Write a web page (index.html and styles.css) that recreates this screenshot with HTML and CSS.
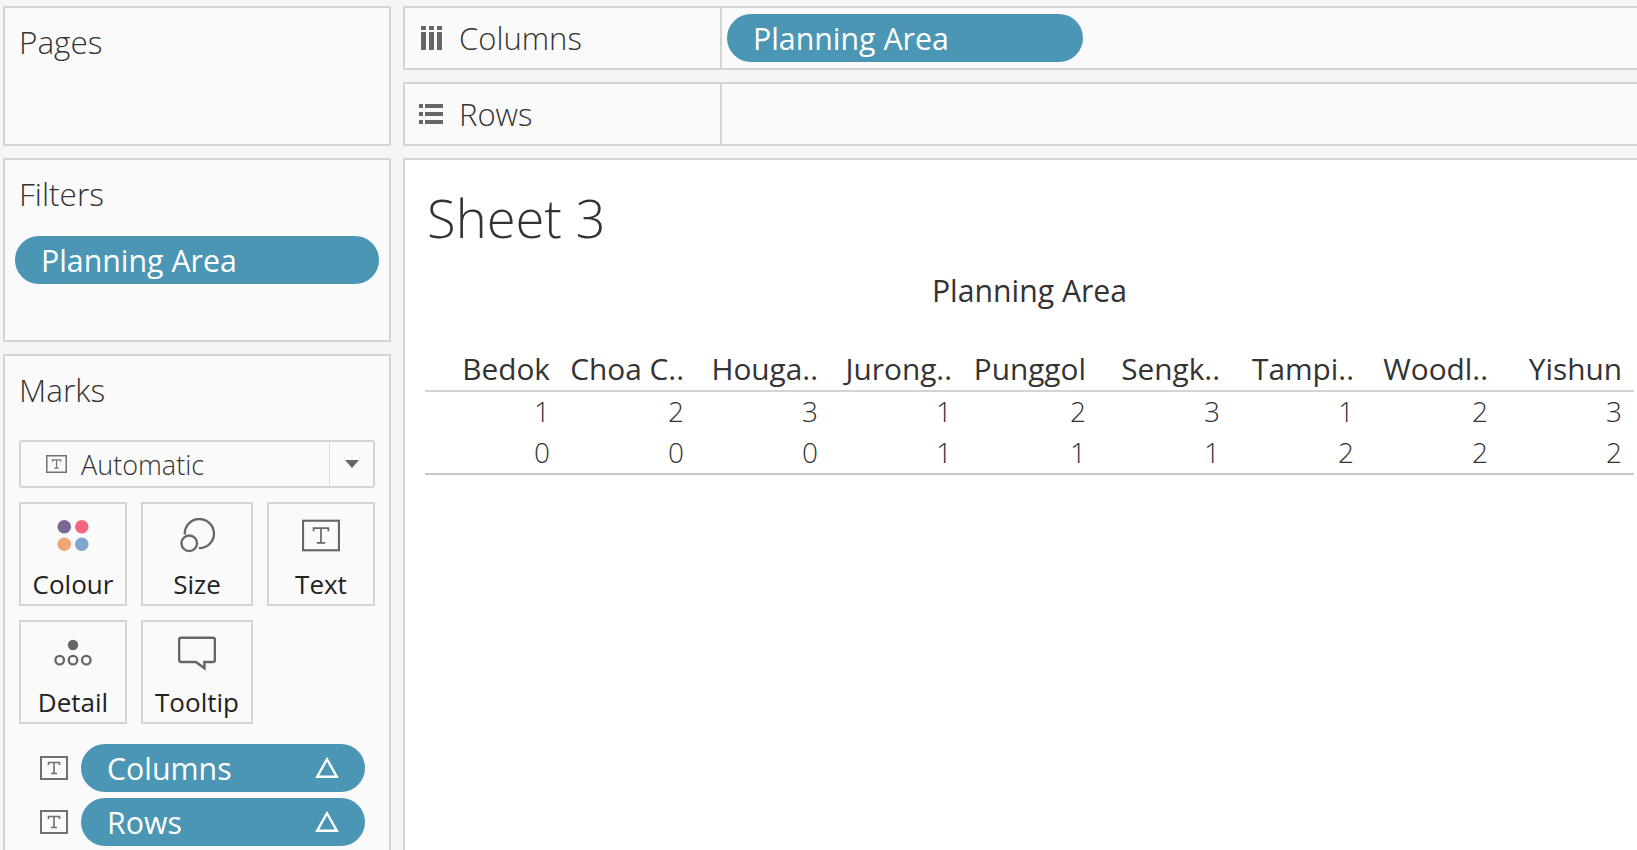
FILE: index.html
```html
<!DOCTYPE html>
<html lang="en">
<head>
  <meta charset="UTF-8">
  <title>Sheet 3</title>
  <link rel="stylesheet" href="styles.css">
</head>
<body>
  <svg class="defs" width="0" height="0">
    <symbol id="textIcon" viewBox="0 0 28 24">
      <rect x="1" y="1" width="26" height="22" fill="none" stroke="#707070" stroke-width="2"/>
      <path d="M8.5 9V6.5h11V9M14 6.5v11M11 17.5h6" fill="none" stroke="#707070" stroke-width="1.6"/>
    </symbol>
    <symbol id="delta" viewBox="0 0 22 20">
      <path d="M11 2 20 18H2Z" fill="none" stroke="#fff" stroke-width="2.2"/>
    </symbol>
  </svg>

  <div class="workspace">
    <aside class="sidebar">
      <section class="panel pagesPanel">
        <h2>Pages</h2>
      </section>
      <section class="panel filtersPanel">
        <h2>Filters</h2>
        <div class="pill filterPill">Planning Area</div>
      </section>
      <section class="panel marksPanel">
        <h2>Marks</h2>
        <div class="markType">
          <div class="markTypeLabel">
            <svg class="markTypeIcon"><use href="#textIcon"/></svg>
            <span>Automatic</span>
          </div>
          <div class="markTypeArrow"><i></i></div>
        </div>
        <div class="markCards">
          <div class="card">
            <svg class="cardIcon" viewBox="0 0 36 36">
              <circle cx="9" cy="9" r="7" fill="#7b6794"/>
              <circle cx="27" cy="9" r="7" fill="#f2677d"/>
              <circle cx="9" cy="27" r="7" fill="#eea677"/>
              <circle cx="27" cy="27" r="7" fill="#7fa6cd"/>
            </svg>
            <span>Colour</span>
          </div>
          <div class="card">
            <svg class="cardIcon" viewBox="0 0 36 36" fill="none" stroke="#666" stroke-width="2.4">
              <path d="M5.5 17A15 15 0 1 1 20 31"/>
              <circle cx="10" cy="26" r="8"/>
            </svg>
            <span>Size</span>
          </div>
          <div class="card">
            <svg class="cardIcon" viewBox="0 0 36 30" fill="none" stroke="#666">
              <rect x="1" y="1" width="34" height="28" stroke-width="2"/>
              <path d="M11 11V8h14v3M18 8v14M14 22h8" stroke-width="1.6"/>
            </svg>
            <span>Text</span>
          </div>
          <div class="card">
            <svg class="cardIcon" viewBox="0 0 40 30">
              <circle cx="20" cy="6" r="5.5" fill="#666"/>
              <g fill="none" stroke="#666" stroke-width="2.4">
                <circle cx="6" cy="22" r="4.5"/>
                <circle cx="20" cy="22" r="4.5"/>
                <circle cx="34" cy="22" r="4.5"/>
              </g>
            </svg>
            <span>Detail</span>
          </div>
          <div class="card">
            <svg class="cardIcon" viewBox="0 0 36 32" fill="none" stroke="#666" stroke-width="2.4">
              <path d="M3 1h30a2 2 0 0 1 2 2v19a2 2 0 0 1-2 2h-8v6l-8-6H3a2 2 0 0 1-2-2V3a2 2 0 0 1 2-2Z"/>
            </svg>
            <span>Tooltip</span>
          </div>
        </div>
        <div class="markFields">
          <div class="markField">
            <svg class="fieldIcon"><use href="#textIcon"/></svg>
            <div class="pill fieldPill">Columns <svg class="deltaIcon"><use href="#delta"/></svg></div>
          </div>
          <div class="markField">
            <svg class="fieldIcon"><use href="#textIcon"/></svg>
            <div class="pill fieldPill">Rows <svg class="deltaIcon"><use href="#delta"/></svg></div>
          </div>
        </div>
      </section>
    </aside>

    <main class="main">
      <div class="shelf">
        <div class="shelfLabel">
          <svg class="shelfIcon" viewBox="0 0 24 24" fill="#666">
            <rect x="2" y="0" width="5" height="4"/><rect x="10" y="0" width="5" height="4"/><rect x="18" y="0" width="5" height="4"/>
            <rect x="2" y="6" width="5" height="18"/><rect x="10" y="6" width="5" height="18"/><rect x="18" y="6" width="5" height="18"/>
          </svg>
          <span>Columns</span>
        </div>
        <div class="shelfBody"><div class="pill shelfPill">Planning Area</div></div>
      </div>
      <div class="shelf">
        <div class="shelfLabel">
          <svg class="shelfIcon" viewBox="0 0 24 20" fill="#666">
            <rect x="0" y="0" width="4" height="4"/><rect x="6" y="0" width="18" height="4"/>
            <rect x="0" y="8" width="4" height="4"/><rect x="6" y="8" width="18" height="4"/>
            <rect x="0" y="16" width="4" height="4"/><rect x="6" y="16" width="18" height="4"/>
          </svg>
          <span>Rows</span>
        </div>
        <div class="shelfBody"></div>
      </div>

      <section class="sheet">
        <h1>Sheet 3</h1>
        <div class="crossTitle">Planning Area</div>
        <div class="crossTab">
          <div class="crossRow headRow">
            <div>Bedok</div><div>Choa C..</div><div>Houga..</div><div>Jurong..</div><div>Punggol</div><div>Sengk..</div><div>Tampi..</div><div>Woodl..</div><div>Yishun</div>
          </div>
          <div class="crossRow">
            <div>1</div><div>2</div><div>3</div><div>1</div><div>2</div><div>3</div><div>1</div><div>2</div><div>3</div>
          </div>
          <div class="crossRow">
            <div>0</div><div>0</div><div>0</div><div>1</div><div>1</div><div>1</div><div>2</div><div>2</div><div>2</div>
          </div>
        </div>
      </section>
    </main>
  </div>
</body>
</html>
```

FILE: styles.css
```css
html, body {
  margin: 0;
  height: 850px;
  overflow: hidden;
}
body {
  font-family: "Open Sans", Arial, sans-serif;
  background-color: #f5f5f5;
  color: #333;
}
.defs {
  position: absolute;
}
.workspace {
  display: flex;
  gap: 12px;
  padding: 6px 0 0 3px;
}
.sidebar {
  width: 388px;
  flex: none;
  display: flex;
  flex-direction: column;
  gap: 12px;
}
.panel {
  box-sizing: border-box;
  background: #fafafa;
  border: 2px solid #d4d4d4;
  padding: 0 12px 0 14px;
}
.panel h2 {
  margin: 0;
  font-size: 31.5px;
  font-weight: 300;
  line-height: 36px;
  padding-top: 16px;
}
.pagesPanel {
  height: 140px;
}
.filtersPanel {
  height: 184px;
}
.marksPanel {
  height: 520px;
}
.pill {
  box-sizing: border-box;
  background: #4a96b4;
  color: #fff;
  height: 48px;
  border-radius: 24px;
  font-size: 30.3px;
  line-height: 50px;
  padding-left: 26px;
}
.filterPill {
  width: 364px;
  margin: 24px 0 0 -4px;
}

/* Marks */
.markType {
  box-sizing: border-box;
  width: 356px;
  height: 48px;
  margin: 32px 0 0 0;
  border: 2px solid #d4d4d4;
  border-radius: 3px;
  display: flex;
}
.markTypeLabel {
  flex: 1;
  display: flex;
  align-items: center;
  gap: 14px;
  padding-left: 25px;
  font-size: 27px;
  font-weight: 300;
  border-right: 1px solid #dcdcdc;
}
.markTypeIcon {
  width: 21px;
  height: 18px;
}
.markTypeArrow {
  width: 43px;
  display: flex;
  align-items: center;
  justify-content: center;
}
.markTypeArrow i {
  border-left: 7px solid transparent;
  border-right: 7px solid transparent;
  border-top: 8px solid #666;
}
.markCards {
  display: grid;
  grid-template-columns: 108px 112px 108px;
  grid-auto-rows: 104px;
  gap: 14px;
  margin-top: 14px;
}
.card {
  box-sizing: border-box;
  border: 2px solid #d4d4d4;
  display: flex;
  flex-direction: column;
  align-items: center;
  font-size: 26px;
  color: #222;
  padding-top: 14px;
}
.card span {
  margin-top: auto;
  padding-bottom: 2px;
}
.cardIcon {
  width: 38px;
  height: 35px;
}
.markFields {
  margin-top: 20px;
  display: flex;
  flex-direction: column;
  gap: 6px;
}
.markField {
  display: flex;
  align-items: center;
  gap: 13px;
  padding-left: 21px;
}
.fieldIcon {
  width: 28px;
  height: 24px;
  flex: none;
}
.fieldPill {
  width: 284px;
  display: flex;
  justify-content: space-between;
  align-items: center;
  padding-top: 2px;
  padding-right: 26px;
}
.deltaIcon {
  width: 24px;
  height: 22px;
  margin-top: -2px;
}

/* Shelves */
.main {
  flex: 1;
  display: flex;
  flex-direction: column;
  gap: 12px;
  min-width: 0;
}
.shelf {
  box-sizing: border-box;
  height: 64px;
  background: #fafafa;
  border: 2px solid #d4d4d4;
  border-right: 0;
  display: flex;
}
.shelfLabel {
  box-sizing: border-box;
  width: 317px;
  border-right: 2px solid #d4d4d4;
  display: flex;
  align-items: center;
  gap: 16px;
  padding-left: 14px;
  padding-bottom: 1px;
  font-size: 31px;
  font-weight: 300;
}
.shelfIcon {
  width: 24px;
  height: 24px;
  flex: none;
}
.shelfBody {
  flex: 1;
  padding: 6px 0 0 5px;
}
.shelfPill {
  width: 356px;
}

/* View */
.sheet {
  box-sizing: border-box;
  height: 700px;
  background: #fff;
  border: 2px solid #d4d4d4;
  border-right: 0;
  border-bottom: 0;
}
.sheet h1 {
  margin: 0;
  padding: 24px 0 0 22px;
  font-size: 52.5px;
  font-weight: 300;
  line-height: 68px;
}
.crossTitle {
  margin-top: 21px;
  padding-left: 17px;
  text-align: center;
  font-size: 30.2px;
  font-weight: 500;
  line-height: 36px;
}
.crossTab {
  margin: 38px 0 0 20px;
  width: 1209px;
  border-bottom: 2px solid #c8c8c8;
}
.crossRow {
  display: grid;
  grid-template-columns: 125px repeat(8, 134px);
  height: 40.5px;
  line-height: 39px;
  font-size: 28px;
  font-weight: 300;
  text-align: right;
}
.headRow {
  height: 43px;
  line-height: 44px;
  font-size: 29.8px;
  font-weight: 500;
  border-bottom: 2px solid #d4d4d4;
}
```
